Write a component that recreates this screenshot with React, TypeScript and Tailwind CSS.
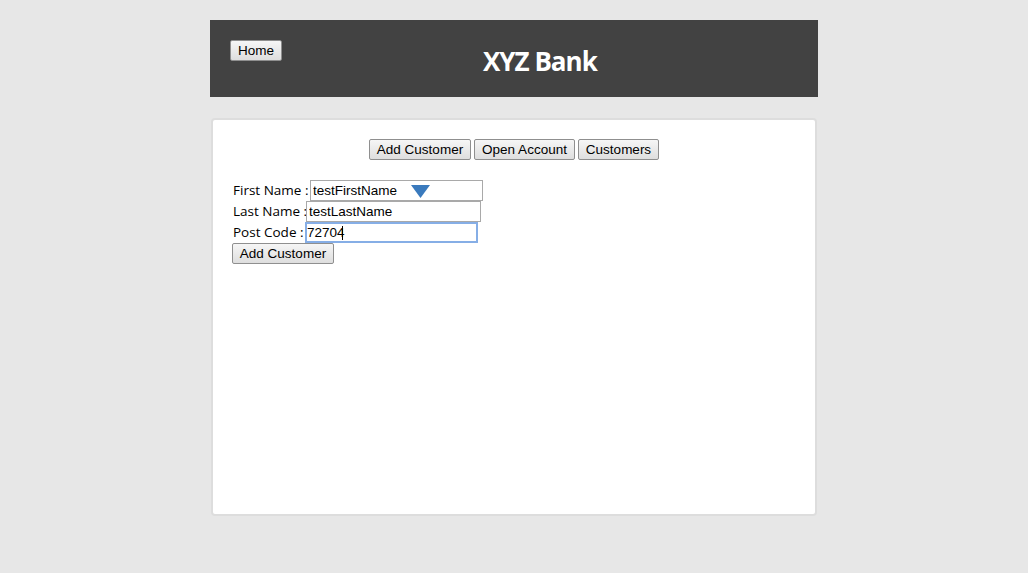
import React from "react";

const btn =
  "h-[21px] px-[6px] border border-[#8f8f8f] bg-gradient-to-b from-[#f6f6f6] to-[#dedede] text-[13.5px] leading-none text-black font-['Liberation_Sans',Arial,sans-serif] rounded-[2px]";

const inputBase =
  "h-[21px] text-[13.5px] text-black font-['Liberation_Sans',Arial,sans-serif] outline-none bg-white";

export default function App() {
  return (
    <div className="min-h-[573px] w-full bg-[#e7e7e7] pt-[20px]">
      <div className="mx-auto w-[608px]">
        <div className="h-[77px] bg-[#424242] flex items-start pl-[20px] pt-[20px]">
          <button className={btn + " w-[52px]"}>Home</button>
          <h1 className="ml-[201px] mt-[3px] text-white text-[26px] font-bold tracking-[-1px] font-['Open_Sans',sans-serif] leading-[36px]">
            XYZ Bank
          </h1>
        </div>
        <div className="mt-[21px] mx-[1px] h-[398px] bg-white border-2 border-[#dddddd] rounded-[4px] px-[20px] pt-[19px]">
          <div className="flex justify-center gap-[3px]">
            <button className={btn + " w-[102px]"}>Add Customer</button>
            <button className={btn + " w-[101px]"}>Open Account</button>
            <button className={btn + " w-[81px]"}>Customers</button>
          </div>
          <form className="mt-[20px] flex flex-col items-start font-['Open_Sans',sans-serif] text-[13.5px] text-black">
            <div className="flex items-center h-[21px]">
              <label className="w-[77px] whitespace-nowrap leading-none">First Name :</label>
              <div className="relative">
                <input
                  className={inputBase + " w-[173px] border border-[#a9a9a9] px-[2px]"}
                  defaultValue="testFirstName"
                />
                <svg className="absolute left-[101px] top-[5px]" width="19" height="13" viewBox="0 0 19 13">
                  <polygon points="0,0 19,0 9.5,13" fill="#3a7abd" />
                </svg>
              </div>
            </div>
            <div className="flex items-center h-[21px]">
              <label className="w-[73px] whitespace-nowrap leading-none">Last Name :</label>
              <input
                className={inputBase + " w-[175px] border border-[#a9a9a9] px-[2px]"}
                defaultValue="testLastName"
              />
            </div>
            <div className="flex items-center h-[21px]">
              <label className="w-[72px] whitespace-nowrap leading-none">Post Code :</label>
              <div className="relative">
                <input
                  className={inputBase + " w-[173px] border-2 border-[#86aee6] px-0"}
                  defaultValue="72704"
                />
                <span className="absolute left-[37px] top-[4px] h-[14px] w-[1px] bg-black" />
              </div>
            </div>
            <button type="button" className={btn + " w-[102px] -ml-[1px]"}>
              Add Customer
            </button>
          </form>
        </div>
      </div>
    </div>
  );
}
